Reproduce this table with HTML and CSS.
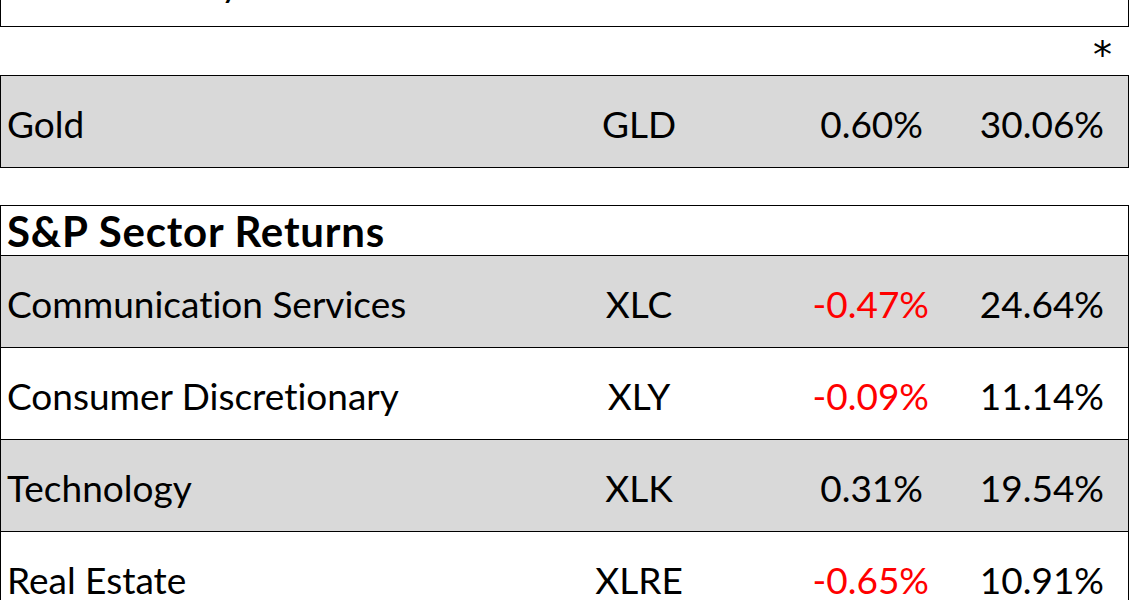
FILE: index.html
```html
<!DOCTYPE html>
<html>
<head>
<meta charset="utf-8">
<link rel="stylesheet" href="styles.css">
</head>
<body>
<div class="page">
  <div class="box box-top">
    <div class="row">
      <div class="name">10-Yr Treasury</div>
      <div class="ticker"></div>
      <div class="num"></div>
      <div class="num"></div>
    </div>
  </div>

  <div class="note-row">
    <div class="note">*</div>
  </div>

  <div class="box">
    <div class="row shaded">
      <div class="name">Gold</div>
      <div class="ticker">GLD</div>
      <div class="num pos">0.60%</div>
      <div class="num">30.06%</div>
    </div>
  </div>

  <div class="box box-section">
    <div class="head">S&amp;P Sector Returns</div>
    <div class="row shaded">
      <div class="name">Communication Services</div>
      <div class="ticker">XLC</div>
      <div class="num neg">-0.47%</div>
      <div class="num">24.64%</div>
    </div>
    <div class="row">
      <div class="name">Consumer Discretionary</div>
      <div class="ticker">XLY</div>
      <div class="num neg">-0.09%</div>
      <div class="num">11.14%</div>
    </div>
    <div class="row shaded">
      <div class="name">Technology</div>
      <div class="ticker">XLK</div>
      <div class="num pos">0.31%</div>
      <div class="num">19.54%</div>
    </div>
    <div class="row">
      <div class="name">Real Estate</div>
      <div class="ticker">XLRE</div>
      <div class="num neg">-0.65%</div>
      <div class="num">10.91%</div>
    </div>
  </div>
</div>
</body>
</html>
```

FILE: styles.css
```css
html, body {
  margin: 0;
  padding: 0;
  background: #ffffff;
}

body {
  font-family: Lato, "Open Sans", sans-serif;
  font-variant-ligatures: none;
  color: #000000;
  overflow: hidden;
}

.page {
  width: 1129px;
  display: flex;
  flex-direction: column;
}

.box {
  border: 1px solid #000000;
  display: flex;
  flex-direction: column;
}

.box-top {
  margin-top: -66px;
}

.box-section {
  margin-top: 37px;
}

.row {
  display: grid;
  grid-template-columns: 553px 158px 211px 175px;
  padding: 3px 24px 0 6px;
  height: 88px;
  align-items: center;
  font-size: 37px;
  border-bottom: 1px solid #000000;
}

.box > .row:last-child {
  border-bottom: none;
}

.shaded {
  background: #d9d9d9;
}

.name {
  white-space: nowrap;
}

.ticker {
  text-align: center;
}

.num {
  text-align: right;
  white-space: nowrap;
}

.num.pos {
  padding-right: 6px;
}

.num.neg {
  color: #ff0000;
}

.head {
  height: 48px;
  padding: 1px 0 0 6px;
  display: flex;
  align-items: center;
  font-size: 42px;
  font-weight: 700;
  letter-spacing: 0.8px;
  border-bottom: 1px solid #000000;
}

.note-row {
  height: 48px;
  display: flex;
  justify-content: flex-end;
  padding-right: 17px;
}

.note {
  font-family: "DejaVu Sans", sans-serif;
  font-size: 38px;
  line-height: 48px;
  padding-top: 4px;
}
```
